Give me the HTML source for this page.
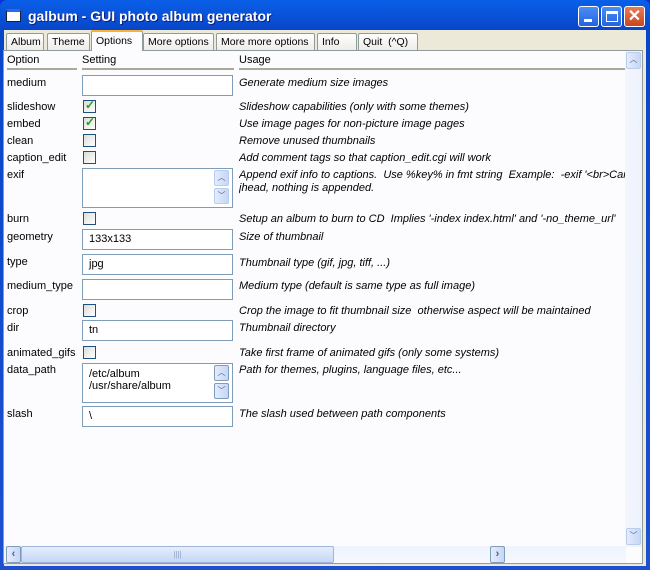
<!DOCTYPE html>
<html><head><style>
*{margin:0;padding:0;box-sizing:border-box}
body{width:650px;height:570px;overflow:hidden;background:#0831d9;font-family:"Liberation Sans",sans-serif;font-size:11px;color:#000;position:relative}
.win{position:absolute;left:0;top:0;width:650px;height:570px;background:linear-gradient(#0a5fe8,#0846c9 30px,#1c50d0);border-radius:7px 7px 0 0}
.title{position:absolute;left:28px;top:8px;color:#fff;font-weight:bold;font-size:14px;text-shadow:1px 1px #0a1e80}
.ticon{position:absolute;left:6px;top:9px;width:15px;height:13px;background:#fff;border:1px solid #123;border-top:3px solid #2a6ae8}
.tb{position:absolute;top:6px;width:21px;height:21px;border:1px solid #fff;border-radius:3px;background:linear-gradient(#4b8cf5,#2463de)}
.client{position:absolute;left:4px;top:30px;width:642px;height:536px;background:#ece9d8}
.tab{position:absolute;top:3px;height:18px;border:1px solid #919b9c;border-bottom:none;background:linear-gradient(#fff,#ecebe6);padding:2px 0 0 4px;border-radius:2px 2px 0 0;font-size:10.5px;white-space:nowrap;overflow:hidden}
.tab.act{top:0;height:21px;background:#fcfcfe;border-top:2px solid #f8b335;z-index:2;padding-top:3px}
.panel{position:absolute;left:-1px;top:20px;width:640px;height:514px;background:#fcfcfe;border:1px solid #919b9c}
.a{position:absolute;white-space:nowrap}
.u{position:absolute;left:235px;font-style:italic;white-space:nowrap;overflow:hidden;width:386px}
.in{position:absolute;left:78px;width:151px;height:21px;border:1px solid #7f9db9;background:#fff;padding:3px 0 0 6px}
.cb{position:absolute;left:79px;width:13px;height:13px;border:1px solid #1c5180;background:linear-gradient(135deg,#dcdcd7,#fff)}
.ck{position:absolute;left:1px;top:-3px;color:#21a121;font-weight:bold;font-size:12px}
.hl{position:absolute;top:48px;height:2px;background:#aca899}
.sb{position:absolute;width:15px;height:16px;border:1px solid #b8cdf0;border-radius:2px;background:linear-gradient(90deg,#e4ecfc,#c6d6f6);font-size:8px;color:#4d6185;text-align:center;line-height:14px}
</style></head><body>
<div class="win">
<div class="ticon"></div>
<div class="title">galbum - GUI photo album generator</div>
<div class="tb" style="left:578px"><div style="position:absolute;left:5px;top:12px;width:8px;height:3px;background:#fff"></div></div>
<div class="tb" style="left:601px"><div style="position:absolute;left:4px;top:4px;width:12px;height:11px;border:1px solid #fff;border-top:3px solid #fff"></div></div>
<div class="tb" style="left:624px;background:linear-gradient(#e87a5a,#c9451f);color:#fff;font-weight:bold;font-size:16px;text-align:center;line-height:19px">✕</div>
<div class="client">
<div class="tab" style="left:2px;width:38px">Album</div>
<div class="tab" style="left:43px;width:43px">Theme</div>
<div class="tab act" style="left:87px;width:52px">Options</div>
<div class="tab" style="left:139px;width:71px">More options</div>
<div class="tab" style="left:212px;width:99px">More more options</div>
<div class="tab" style="left:313px;width:40px">Info</div>
<div class="tab" style="left:354px;width:60px">Quit&nbsp; (^Q)</div>
<div class="panel">
<div class="a" style="left:3px;top:3px">Option</div>
<div class="a" style="left:78px;top:3px">Setting</div>
<div class="a" style="left:235px;top:3px">Usage</div>
<div class="hl" style="left:3px;width:70px;top:17px"></div>
<div class="hl" style="left:78px;width:152px;top:17px"></div>
<div class="hl" style="left:235px;width:386px;top:17px"></div>

<div class="a" style="left:3px;top:26px">medium</div><div class="in" style="top:24px"></div><div class="u" style="top:26px">Generate medium size images</div>
<div class="a" style="left:3px;top:50px">slideshow</div><div class="cb" style="top:49px"><span class="ck">✓</span></div><div class="u" style="top:50px">Slideshow capabilities (only with some themes)</div>
<div class="a" style="left:3px;top:67px">embed</div><div class="cb" style="top:66px"><span class="ck">✓</span></div><div class="u" style="top:67px">Use image pages for non-picture image pages</div>
<div class="a" style="left:3px;top:84px">clean</div><div class="cb" style="top:83px"></div><div class="u" style="top:84px">Remove unused thumbnails</div>
<div class="a" style="left:3px;top:101px">caption_edit</div><div class="cb" style="top:100px"></div><div class="u" style="top:101px">Add comment tags so that caption_edit.cgi will work</div>
<div class="a" style="left:3px;top:118px">exif</div><div class="in" style="top:117px;height:40px"><div class="sb" style="left:131px;top:1px">︿</div><div class="sb" style="left:131px;top:19px">﹀</div></div>
<div class="u" style="top:118px;line-height:13px">Append exif info to captions.&nbsp; Use %key% in fmt string&nbsp; Example:&nbsp; -exif '&lt;br&gt;Camera<br>jhead, nothing is appended.</div>
<div class="a" style="left:3px;top:162px">burn</div><div class="cb" style="top:161px"></div><div class="u" style="top:162px">Setup an album to burn to CD&nbsp; Implies '-index index.html' and '-no_theme_url'</div>
<div class="a" style="left:3px;top:180px">geometry</div><div class="in" style="top:178px">133x133</div><div class="u" style="top:180px">Size of thumbnail</div>
<div class="a" style="left:3px;top:205px">type</div><div class="in" style="top:203px">jpg</div><div class="u" style="top:206px">Thumbnail type (gif, jpg, tiff, ...)</div>
<div class="a" style="left:3px;top:229px">medium_type</div><div class="in" style="top:228px"></div><div class="u" style="top:229px">Medium type (default is same type as full image)</div>
<div class="a" style="left:3px;top:254px">crop</div><div class="cb" style="top:253px"></div><div class="u" style="top:254px">Crop the image to fit thumbnail size&nbsp; otherwise aspect will be maintained</div>
<div class="a" style="left:3px;top:271px">dir</div><div class="in" style="top:269px">tn</div><div class="u" style="top:271px">Thumbnail directory</div>
<div class="a" style="left:3px;top:296px">animated_gifs</div><div class="cb" style="top:295px"></div><div class="u" style="top:296px">Take first frame of animated gifs (only some systems)</div>
<div class="a" style="left:3px;top:313px">data_path</div><div class="in" style="top:312px;height:40px;line-height:12px;padding-top:4px">/etc/album<br>/usr/share/album<div class="sb" style="left:131px;top:1px;border-color:#7f9db9">︿</div><div class="sb" style="left:131px;top:19px;border-color:#7f9db9">﹀</div></div>
<div class="u" style="top:313px">Path for themes, plugins, language files, etc...</div>
<div class="a" style="left:3px;top:357px">slash</div><div class="in" style="top:355px">\</div><div class="u" style="top:357px">The slash used between path components</div>

<div style="position:absolute;left:621px;top:0;width:17px;height:496px;background:linear-gradient(90deg,#f3f6fd,#eef2fc)"></div>
<div class="sb" style="left:622px;top:1px;height:17px">︿</div>
<div class="sb" style="left:622px;top:477px;height:17px">﹀</div>
<div style="position:absolute;left:0;top:495px;width:622px;height:17px;background:linear-gradient(#eef3fd,#f6f8fe)"></div>
<div class="sb" style="left:2px;top:495px;width:15px;height:17px;border-color:#7f9db9;font-size:11px;font-weight:bold;line-height:15px">‹</div>
<div style="position:absolute;left:17px;top:495px;width:313px;height:17px;border:1px solid #a0b4dc;border-radius:2px;background:linear-gradient(#e6eefc,#c5d6f7);text-align:center;color:#8ea2c8;font-size:8px;line-height:15px">||||</div>
<div class="sb" style="left:486px;top:495px;width:15px;height:17px;border-color:#7f9db9;font-size:11px;font-weight:bold;line-height:15px">›</div>
</div>
</div>
</div>
</body></html>
